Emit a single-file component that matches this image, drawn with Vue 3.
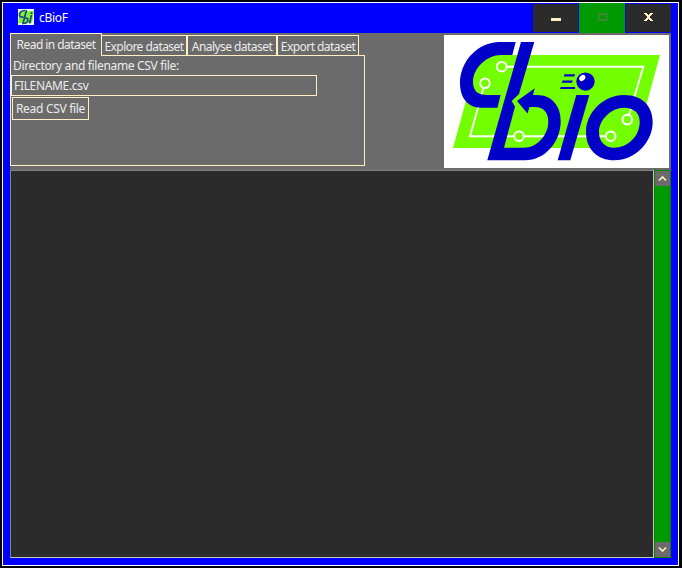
<script setup>
import { ref } from 'vue'
const tabs = ['Read in dataset', 'Explore dataset', 'Analyse dataset', 'Export dataset']
const active = ref(0)
const filename = ref('FILENAME.csv')
</script>

<template>
  <div class="desktop">
    <div class="window">
      <header class="titlebar">
        <svg class="appicon" viewBox="0 0 16 16">
          <rect width="16" height="16" fill="#f4fbef" />
          <path d="M2 2H16L14 14H0Z" fill="#83ef38" />
          <path d="M7 1.500C3 1.500 1 4 1.500 6.500S4 8 5.500 8M8.500 1L5 14.500C9 14.500 10.500 12 9.500 9.500L7 9M13.500 6L11.500 14.500" fill="none" stroke="#164a80" stroke-width="1.700" />
          <circle cx="13.500" cy="4" r="1.100" fill="#164a80" />
        </svg>
        <span class="title">cBioF</span>
        <div class="controls">
          <button class="ctl"><svg viewBox="0 0 46 28"><path d="M18 14h10v3H18z" fill="#ffefc6" /></svg></button>
          <button class="ctl max"><svg viewBox="0 0 46 30"><rect x="19.500" y="11" width="8" height="6" fill="none" stroke="#3c8a32" stroke-width="2" /></svg></button>
          <button class="ctl"><svg viewBox="0 0 46 28"><path d="M18 9h3v1h1v1h1v-1h1v-1h3v1h-1v1h-1v1h-1v2h1v1h1v1h1v1h-3v-1h-1v-1h-1v1h-1v1h-3v-1h1v-1h1v-1h1v-2h-1v-1h-1v-1h-1z" fill="#ffefc6" /></svg></button>
        </div>
      </header>
      <main class="client">
        <section class="top">
          <div class="notebook">
            <nav class="tabs">
              <div v-for="(t, i) in tabs" :key="t" class="tab" :class="['t' + i, { active: active === i }]" @click="active = i"><span>{{ t }}</span></div>
            </nav>
            <div class="panel">
              <label class="label" for="csv">Directory and filename CSV file:</label>
              <input id="csv" v-model="filename" class="entry" />
              <button class="read">Read CSV file</button>
            </div>
          </div>
          <svg class="logo" viewBox="444 35 225 133">
            <rect x="444" y="35" width="225" height="133" fill="#fff" />
            <path d="M478.600 55H660L634.400 148H453Z" fill="#73ff00" />
            <g fill="none" stroke="#fff" stroke-width="1.900">
              <path d="M506.500 66.700H643.300L629 115M483.500 88L470 136.200H514M524 136.200H606" />
              <g stroke-width="2">
                <circle cx="501.700" cy="66.700" r="4.800" /><circle cx="485" cy="83.300" r="4.800" />
                <circle cx="519" cy="136.200" r="4.800" /><circle cx="610.700" cy="136.200" r="4.800" />
                <circle cx="627.300" cy="119.600" r="4.800" />
              </g>
            </g>
            <g fill="#0000c8">
              <path d="M515.700 42H500C477 42 460 62 460 83C460 98 468 107.700 481 107.700H497.500L500.600 95H487C478 95 473 91 473 82C473 68 487 55 501 55H512.300Z" />
              <path d="M521 42H534.300L519 94L511.700 101L515 106.700L504 147.700H523.500C538 147.700 548.300 134 548.300 121.700C548.300 112 543 107 535 107H529.500L527.500 113.500L517 101L534.700 88.300L533 95H537C552 95 560.700 106 560.700 121C560.700 142 545 160.300 525 160.300H487.300Z" />
              <path d="M576.300 95H589.300L570.300 160.300H557.700Z" />
              <path fill-rule="evenodd" d="M624 95C642 95 652.700 106 652.700 122C652.700 142 635 160.300 614.500 160.300C597 160.300 586 149 586 132C586 112 604 95 624 95ZM624 107.700C611 107.700 599 120 599 132C599 142 605 147.700 614 147.700C628 147.700 639.700 136 639.700 122C639.700 113 634 107.700 624 107.700Z" />
              <circle cx="585.500" cy="81.600" r="9.200" />
              <path d="M564.500 74.300h10.500l-.6 2.100h-10.500zM562.700 80.600h10l-.6 2.100h-10.500zM560.700 87h14.300v2.100h-14.900z" />
            </g>
            <ellipse cx="582.300" cy="78" rx="3.400" ry="2.600" transform="rotate(-40 582.300 78)" fill="#fff" />
          </svg>
        </section>
        <section class="output">
          <div class="text"></div>
          <div class="scroll">
            <svg viewBox="0 0 15 15"><path d="M4 9.500L7.500 6L11 9.500" /></svg>
            <svg viewBox="0 0 15 15"><path d="M4 5.500L7.500 9L11 5.500" /></svg>
          </div>
        </section>
      </main>
    </div>
  </div>
</template>

<style>
body { margin: 0; background: #000; }
</style>
<style scoped>
* { box-sizing: border-box; }
button, input { font: inherit; color: inherit; border-radius: 0; padding: 0; margin: 0; appearance: none; outline: 0; }
.desktop { width: 682px; height: 568px; padding: 2px 3px 2px 2px; background: #000; font: 12px/16px "Noto Sans", "Open Sans", sans-serif; color: #ebebeb; }
.window { height: 564px; border: 1px solid #fff; background: #00f; padding: 0 7px; display: flex; flex-direction: column; }
.titlebar { height: 30px; display: flex; align-items: center; padding-left: 8px; color: #fff; }
.appicon { width: 16px; height: 16px; margin-top: -2px; }
.title { margin-left: 5px; flex: 1; padding-bottom: 1px; letter-spacing: -.3px; }
.controls { display: flex; align-items: center; gap: 1px; align-self: flex-start; }
.ctl { width: 45px; height: 28px; border: 0; background: #2b2b2b; display: flex; }
.ctl svg { width: 46px; height: 28px; flex: none; }
.ctl.max { width: 46px; height: 30px; background: #009a00; }
.ctl.max svg { height: 30px; }
.client { height: 525px; background: #6b6b6b; display: flex; flex-direction: column; }
.top { height: 137px; display: flex; justify-content: space-between; }
.notebook { width: 355px; }
.tabs { position: relative; height: 22px; display: flex; align-items: flex-end; }
.tab { height: 20px; border: 1px solid #ffefc6; border-bottom: 0; display: flex; justify-content: center; align-items: center; padding-top: 3px; white-space: nowrap; letter-spacing: -.55px; }
.tab.active { height: 23px; margin-bottom: -1px; padding: 0 0 1px; background: #6b6b6b; }
.t0 { width: 92px; }
.t1 { width: 85px; }
.t1, .t0.active + .t1 { border-left: 0; }
.t2 { width: 90px; }
.t3 { width: 82px; }
.panel { height: 111px; border: 1px solid #ffefc6; display: flex; flex-direction: column; align-items: flex-start; }
.label { height: 19px; padding: 2px 0 0 2px; letter-spacing: -.34px; }
.entry { width: 306px; height: 21px; border: 1px solid #ffefc6; background: transparent; padding-left: 2px; letter-spacing: -.33px; }
.read { width: 77px; height: 23px; margin: 1px 0 0 1px; border: 1px solid #ffefc6; background: transparent; letter-spacing: -.3px; }
.logo { width: 225px; height: 133px; margin: 2px 2px 0 0; }
.output { height: 388px; display: flex; }
.text { width: 644px; border: 1px solid #828282; border-right-color: #c8c8c0; border-bottom-color: #c8c8c0; background: #2b2b2b; }
.scroll { width: 17px; background: #009a00; border: 1px solid #008000; display: flex; flex-direction: column; justify-content: space-between; }
.scroll svg { width: 15px; height: 15px; background: #6b6b6b; fill: none; stroke: #ffefc6; stroke-width: 1.7; }
</style>
